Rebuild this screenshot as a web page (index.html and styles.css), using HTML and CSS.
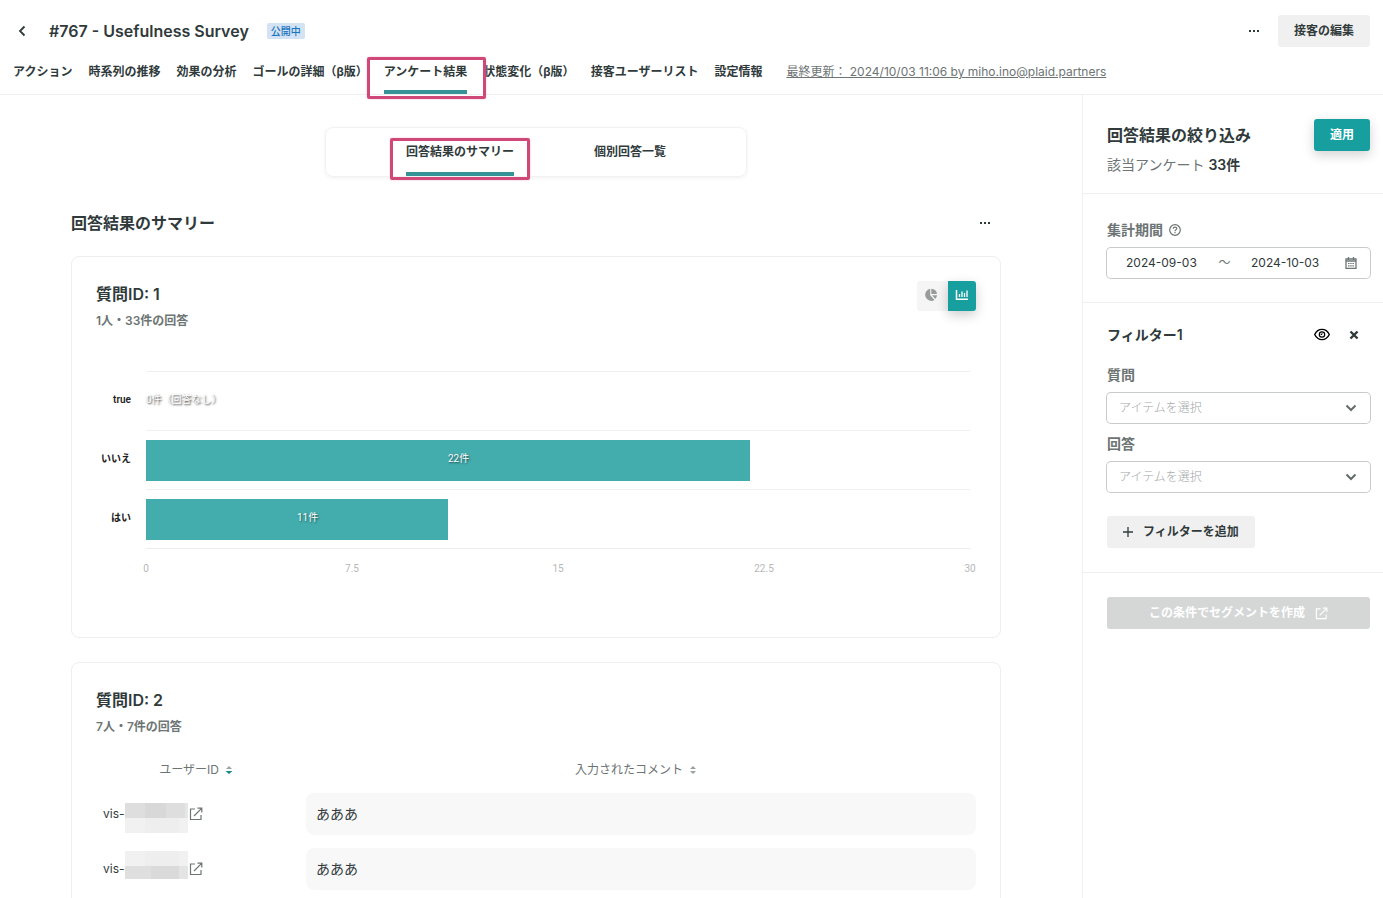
FILE: index.html
```html
<!DOCTYPE html>
<html lang="ja">
<head>
<meta charset="utf-8">
<meta name="viewport" content="width=device-width, initial-scale=1">
<title>#767 - Usefulness Survey</title>
<link rel="stylesheet" href="styles.css">
</head>
<body>
<svg class="sprite" aria-hidden="true">
  <symbol id="external" viewBox="0 0 14 14"><path d="M6 2H1.5v10.500h10.500V8M8.500 1.200h4.300v4.300M12.600 1.400 5 9" fill="none" stroke="currentColor" stroke-width="1.200"/></symbol>
  <symbol id="dots" viewBox="0 0 12 4"><path d="M1 1h2v2H1zM5 1h2v2H5zM9 1h2v2H9z" fill="currentColor"/></symbol>
  <symbol id="chevron" viewBox="0 0 12 8"><path d="M1.500 1.500 6 6l4.500-4.500" fill="none" stroke="currentColor" stroke-width="2"/></symbol>
</svg>
<div class="app">
  <header class="header">
    <div class="title-row">
      <button class="icon-button back" aria-label="戻る"><svg width="8" height="12" viewBox="0 0 8 12"><path d="M6.500 1.500 2 6l4.500 4.500" fill="none" stroke="currentColor" stroke-width="1.800"/></svg></button>
      <h1 class="title">#767 - Usefulness Survey</h1>
      <span class="badge">公開中</span>
      <button class="icon-button push" aria-label="メニュー"><svg width="12" height="4"><use href="#dots"/></svg></button>
      <button class="button edit">接客の編集</button>
    </div>
    <nav class="tabs">
      <a class="tab" href="#action">アクション</a>
      <a class="tab" href="#trend">時系列の推移</a>
      <a class="tab" href="#effect">効果の分析</a>
      <a class="tab" href="#goal">ゴールの詳細（β版）</a>
      <a class="tab active marked" href="#survey">アンケート結果</a>
      <a class="tab" href="#state">状態変化（β版）</a>
      <a class="tab" href="#users">接客ユーザーリスト</a>
      <a class="tab" href="#settings">設定情報</a>
      <a class="updated" href="#history">最終更新： 2024/10/03 11:06 by miho.ino@plaid.partners</a>
    </nav>
  </header>
  <div class="body">
    <main class="main">
      <nav class="subtabs">
        <a class="subtab active marked" href="#summary">回答結果のサマリー</a>
        <a class="subtab" href="#answers">個別回答一覧</a>
      </nav>
      <div class="section-head">
        <h2 class="heading">回答結果のサマリー</h2>
        <button class="icon-button" aria-label="メニュー"><svg width="12" height="4"><use href="#dots"/></svg></button>
      </div>
      <section class="card card-chart">
        <div class="card-head">
          <div>
            <h3 class="heading question">質問ID: 1</h3>
            <p class="count">1人・33件の回答</p>
          </div>
          <div class="toggle">
            <button class="toggle-button" aria-label="円グラフ"><svg width="14" height="14" viewBox="0 0 14 14"><path d="M6.200.800V7.200l4.300 4.800A6.100 6.100 0 1 1 6.200.800z" fill="currentColor"/><path d="M7.300.700a5.900 5.900 0 0 1 5.700 5.300H7.300zM8 7.200h5a6 6 0 0 1-1.700 3.900z" fill="currentColor"/></svg></button>
            <button class="toggle-button on" aria-label="棒グラフ"><svg width="14" height="12" viewBox="0 0 14 12"><path d="M1.500 1v9.300H13" fill="none" stroke="currentColor" stroke-width="1.500"/><path d="M4.500 5v3M7 2.500V8M9.500 4v4M12 1.500V8" stroke="currentColor" stroke-width="1.300"/></svg></button>
          </div>
        </div>
        <div class="chart">
          <div class="chart-row"><span class="chart-label">true</span><div class="plot"><span class="empty">0件（回答なし）</span></div></div>
          <div class="chart-row"><span class="chart-label">いいえ</span><div class="plot"><div class="bar" style="width:73.33%">22件</div></div></div>
          <div class="chart-row"><span class="chart-label">はい</span><div class="plot"><div class="bar" style="width:36.67%">11件</div></div></div>
          <div class="axis"><span>0</span><span>7.5</span><span>15</span><span>22.5</span><span>30</span></div>
        </div>
      </section>
      <section class="card">
        <h3 class="heading question">質問ID: 2</h3>
        <p class="count">7人・7件の回答</p>
        <table class="answers">
          <thead>
            <tr>
              <th class="col-user" scope="col">ユーザーID<svg class="sort" width="8" height="8" viewBox="0 0 8 8"><path d="M4 0 7 3H1z" fill="#9aa5a5"/><path d="M.500 5h7L4 8z" fill="#108a8b"/></svg></th>
              <th scope="col">入力されたコメント<svg class="sort" width="8" height="8" viewBox="0 0 8 8"><path d="M4 0 7 3H1zM1 5h6L4 8z" fill="#9aa0a0"/></svg></th>
            </tr>
          </thead>
          <tbody>
            <tr>
              <td><div class="user">vis-<svg width="63" height="40" viewBox="0 0 63 40" shape-rendering="crispEdges"><path d="M0 9h63v15H0z" fill="#dedede"/><path d="M20 9h21v15H20z" fill="#d8d8d8"/><path d="M0 24h63v15H0z" fill="#f1f1f1"/><path d="M20 24h34v15H20z" fill="#eee"/><path d="M60 9h3v15h-3z" fill="#e6e6e6"/></svg><a class="open" href="#user-1" aria-label="ユーザーを開く"><svg width="14" height="14"><use href="#external"/></svg></a></div></td>
              <td><div class="comment">あああ</div></td>
            </tr>
            <tr>
              <td><div class="user">vis-<svg width="63" height="40" viewBox="0 0 63 40" shape-rendering="crispEdges"><path d="M0 2h63v15H0z" fill="#f1f1f1"/><path d="M20 2h34v15H20z" fill="#eee"/><path d="M0 17h63v13H0z" fill="#dfdfdf"/><path d="M26 17h28v13H26z" fill="#dadada"/><path d="M54 17h9v13h-9z" fill="#e4e4e4"/></svg><a class="open" href="#user-2" aria-label="ユーザーを開く"><svg width="14" height="14"><use href="#external"/></svg></a></div></td>
              <td><div class="comment">あああ</div></td>
            </tr>
          </tbody>
        </table>
      </section>
    </main>
    <aside class="side">
      <section class="panel panel-head">
        <div>
          <h2 class="heading">回答結果の絞り込み</h2>
          <p class="matched">該当アンケート <strong>33件</strong></p>
        </div>
        <button class="button primary">適用</button>
      </section>
      <section class="panel panel-period">
        <div class="label"><label for="from">集計期間</label><svg width="12" height="12" viewBox="0 0 12 12"><g fill="none" stroke="currentColor" stroke-width="1.200"><circle cx="6" cy="6" r="5.300"/><path d="M4.200 4.700C4.300 2.700 7.800 2.700 7.800 4.600 7.800 5.800 6 5.700 6 7.200"/></g><path d="M5.400 8h1.200v1.200H5.400z" fill="currentColor"/></svg></div>
        <div class="field">
          <input class="date" id="from" type="text" value="2024-09-03">
          <span class="tilde">～</span>
          <input class="date" type="text" value="2024-10-03" aria-label="終了日">
          <svg class="calendar" width="12" height="12" viewBox="0 0 12 12"><path d="M1 2h10v9.500H1zM1 4h10M3.500 0v3M8.500 0v3" fill="none" stroke="currentColor" stroke-width="1.300"/><path d="M3 6.500h6M3 8.800h6" stroke="currentColor" stroke-width="1.200" stroke-dasharray="1.500 .7"/></svg>
        </div>
      </section>
      <section class="panel panel-filter">
        <div class="filter-head">
          <h3 class="filter-title">フィルター1</h3>
          <button class="icon-button eye" aria-label="表示"><svg width="16" height="14" viewBox="0 0 16 14"><path d="M.700 6.500C4-.300 12-.300 15.300 6.500 12 13.300 4 13.300.700 6.500z" fill="none" stroke="currentColor" stroke-width="1.400"/><circle cx="8" cy="6.500" r="2.700" fill="none" stroke="currentColor" stroke-width="1.200"/><path d="M8 5.200v1.300H6.700" fill="none" stroke="currentColor"/></svg></button>
          <button class="icon-button" aria-label="削除"><svg width="10" height="10" viewBox="0 0 10 10"><path d="m1.500 1.500 7 7m0-7-7 7" stroke="currentColor" stroke-width="2.400"/></svg></button>
        </div>
        <label class="label" for="question">質問</label>
        <div class="field">
          <select class="select" id="question"><option>アイテムを選択</option></select>
          <svg class="chevron" width="12" height="8"><use href="#chevron"/></svg>
        </div>
        <label class="label" for="answer">回答</label>
        <div class="field">
          <select class="select" id="answer"><option>アイテムを選択</option></select>
          <svg class="chevron" width="12" height="8"><use href="#chevron"/></svg>
        </div>
        <button class="button add"><svg width="10" height="10" viewBox="0 0 10 10"><path d="M5 0v10M0 5h10" stroke="currentColor" stroke-width="1.300"/></svg>フィルターを追加</button>
      </section>
      <section class="panel">
        <button class="button segment" disabled>この条件でセグメントを作成<svg width="13" height="13"><use href="#external"/></svg></button>
      </section>
    </aside>
  </div>
</div>
</body>
</html>
```
FILE: styles.css
```css
* { box-sizing: border-box; }
:root {
  --text: #303a3b;
  --muted: #6d7474;
  --line: #efefef;
  --teal: #179fa0;
  --mark: #cf4877;
}
body, h1, h2, h3, p { margin: 0; }
body {
  background: #fff;
  color: var(--text);
  font: 12px/16px Inter, "Noto Sans CJK JP", sans-serif;
}
svg { display: block; flex: none; }
.sprite { position: absolute; width: 0; height: 0; }
a { color: inherit; text-decoration: none; }
button, input, select { font: inherit; color: inherit; }
.app { display: flex; flex-direction: column; height: 100vh; overflow: hidden; }

.header { border-bottom: 1px solid var(--line); padding: 15px 13px 0; }
.title-row { display: flex; align-items: center; height: 32px; }
.title { font-size: 16px; line-height: 24px; font-weight: 600; }
.icon-button {
  display: flex; align-items: center; justify-content: center;
  width: 24px; height: 24px; padding: 0; border: 0; background: none;
}
.back { width: 18px; margin-right: 18px; }
.badge {
  margin-left: 18px; padding: 0 4px; border-radius: 2px;
  background: #d3e3f3; color: #1a73c0;
  font-size: 10px; line-height: 16px; font-weight: 500;
}
.push { margin-left: auto; margin-right: 12px; }
.button {
  display: flex; align-items: center; justify-content: center;
  height: 32px; padding: 0 16px; border: 0; border-radius: 3px;
  background: #f0f0f0; font-weight: 700; white-space: nowrap;
}
.tabs { display: flex; gap: 16px; height: 47px; font-weight: 700; white-space: nowrap; }
.tab { position: relative; padding-top: 17px; border-bottom: 4px solid transparent; }
.active { border-bottom-color: #349394; }
.marked::after {
  content: ""; position: absolute; z-index: 1;
  border: 3px solid var(--mark); border-radius: 2px;
  box-shadow: 0 0 2px #f0b8cc;
}
.tab.marked::after { inset: 10px -19px -9px -17px; }
.updated {
  padding-top: 17px; margin-left: 8px;
  color: var(--muted); font-weight: 400; text-decoration: underline;
}

.body { display: flex; flex: 1; min-height: 0; }
.main { flex: 1; min-width: 0; padding: 32px 81px 0 71px; overflow: hidden; }
.subtabs {
  display: flex; gap: 80px; width: fit-content; margin: 0 auto; padding: 0 80px;
  border: 1px solid #f2f2f2; border-radius: 8px; font-weight: 700;
  box-shadow: 0 1px 4px #0000000f;
}
.subtab { position: relative; height: 48px; padding-top: 16px; border-bottom: 4px solid transparent; }
.subtab.active { border-bottom-color: #349394; }
.subtab.marked::after { inset: 10px -16px -8px -16px; }
.section-head { display: flex; align-items: center; justify-content: space-between; margin: 34px 4px 21px 0; }
.heading { font-size: 16px; line-height: 24px; font-weight: 600; }
.card { margin-bottom: 24px; padding: 24px; border: 1px solid var(--line); border-radius: 8px; }
.card-chart { padding-bottom: 60px; }
.card-head { display: flex; justify-content: space-between; align-items: flex-start; }
.question { padding-top: 1px; }
.count { margin-top: 7px; color: var(--muted); font-weight: 600; }
.toggle { display: flex; }
.toggle-button {
  display: flex; align-items: center; justify-content: center;
  width: 31px; height: 30px; padding: 0 4px 2px 0; border: 0; border-radius: 3px 0 0 3px;
  background: #f5f5f5; color: #999c9c;
}
.toggle-button.on {
  width: 28px; padding-right: 0; border-radius: 0 3px 3px 0; background: var(--teal); color: #fff;
  box-shadow: 0 4px 12px #00000033;
}
.chart { padding: 42px 6px 0 50px; font-family: Roboto, "Noto Sans CJK JP", sans-serif; font-size: 10px; }
.chart-row { position: relative; height: 59px; border-top: 1px solid #f0f0f0; }
.chart-label {
  position: absolute; right: 100%; top: 50%; margin: -9px 15px 0 0;
  color: #222; font-weight: 600; white-space: nowrap;
}
.plot { display: flex; align-items: center; height: 58px; }
.empty { padding-bottom: 2px; color: #fff; text-shadow: 1px 1px 2px #000000cc; }
.bar {
  display: flex; align-items: center; justify-content: center; height: 41px; padding: 0 0 2px 21px;
  background: #43adae; color: #fff; text-shadow: 1px 1px 2px #00000099;
}
.axis {
  display: flex; justify-content: space-between; padding-top: 12px;
  border-top: 1px solid #ececec; color: #b5b8b8;
}
.axis span { display: flex; justify-content: center; width: 0; }

.answers { width: 100%; margin-top: 18px; border-collapse: collapse; table-layout: fixed; }
.answers th { height: 33px; padding: 0; color: var(--muted); font-weight: 400; text-align: center; }
.col-user { width: 200px; }
.sort { display: inline-block; margin-left: 6px; }
.answers td { height: 55px; padding: 0; }
.user { display: flex; align-items: center; padding-left: 7px; }
.open { margin-left: 1px; color: var(--muted); }
.comment {
  height: 42px; margin-left: 10px; padding: 0 10px; border-radius: 8px;
  background: #f8f8f8; font-size: 14px; line-height: 42px;
}

.side { width: 301px; border-left: 1px solid var(--line); }
.panel { padding: 24px 13px 24px 24px; border-bottom: 1px solid var(--line); }
.panel:last-child { border-bottom: 0; }
.panel-head { display: flex; justify-content: space-between; align-items: flex-start; padding-bottom: 16px; }
.panel-head .heading { padding-top: 4px; }
.matched { margin-top: 6px; color: var(--muted); font-size: 14px; line-height: 24px; }
.matched strong { color: var(--text); font-weight: 600; }
.primary { background: var(--teal); color: #fff; box-shadow: 0 4px 12px #0000002e; }
.label {
  display: flex; align-items: center; gap: 6px; margin-bottom: 6px;
  color: var(--muted); font-size: 14px; line-height: 24px; font-weight: 600;
}
.field {
  position: relative; display: flex; align-items: center; height: 30px;
  border-radius: 4px; box-shadow: 0 0 0 1px #c8cbcb;
}
.date { width: 72px; padding: 0; border: 0; background: none; outline: 0; }
.field .date:first-child { margin-left: 19px; }
.tilde { width: 53px; text-align: center; color: var(--muted); }
.calendar { margin-left: auto; margin-right: 13px; color: var(--muted); }
.select {
  width: 100%; height: 30px; padding: 0 12px; border: 0; background: none;
  appearance: none; color: #a4a8a8; font-weight: 300;
}
.chevron { position: absolute; right: 13px; top: 11px; color: #646b6b; pointer-events: none; }
.panel-filter .field { margin-bottom: 9px; }
.filter-head { display: flex; align-items: center; height: 16px; margin-bottom: 20px; }
.filter-title { flex: 1; font-size: 14px; line-height: 24px; font-weight: 600; }
.eye { margin-right: 8px; color: #000; }
.filter-head .icon-button:last-child { margin-right: 4px; }
.add { gap: 10px; margin-top: 24px; }
.segment { width: 100%; gap: 10px; background: #d5d7d7; color: #fff; }
```
